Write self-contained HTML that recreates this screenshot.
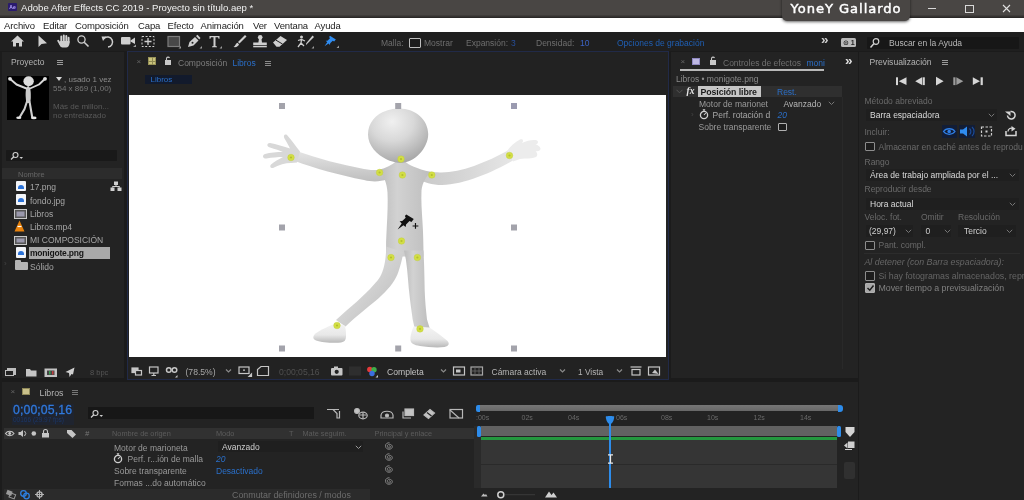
<!DOCTYPE html>
<html lang="es">
<head>
<meta charset="utf-8">
<title>Adobe After Effects CC 2019 - Proyecto sin título.aep *</title>
<style>
html,body{margin:0;padding:0;}
body{width:1024px;height:500px;overflow:hidden;background:#1b1b1b;font-family:"Liberation Sans","DejaVu Sans",sans-serif;font-size:8.5px;color:#a8a8a8;position:relative;}
#app{position:absolute;left:0;top:0;width:1024px;height:500px;overflow:hidden;filter:blur(0.550px);will-change:transform;}
.abs{position:absolute;}
.t{position:absolute;white-space:nowrap;line-height:10px;}
#titlebar{left:0;top:0;width:1024px;height:17.500px;background:linear-gradient(#494644 0,#494644 14.500px,#3a3735 16px,#2a2827 17.500px);}
#menubar{left:0;top:17.800px;width:1024px;height:14.400px;background:#fff;color:#222;}
#toolbar{left:0;top:32.200px;width:1024px;height:19.300px;background:#1f1f1f;}
.panel{background:#232323;}
.m{top:3px;font-size:9.5px;color:#222;letter-spacing:-.12px;}
.fi{left:15.500px;width:10px;height:10.500px;background:#f2f4f8;border-radius:1px;}
.fi i{position:absolute;left:2px;top:4px;width:6px;height:4px;background:#2a72d8;border-radius:3px 3px 0 0;}
.ci{left:14px;width:12.500px;height:9.500px;background:#9a98ac;border:1px solid #c8c8c8;box-sizing:border-box;box-shadow:inset 0 0 0 1.500px #555;}
.li{left:30px;font-size:8.500px;color:#a6a6a6;}
.hd{top:46.500px;font-size:7.350px;color:#5c5c5c;line-height:9px;}
.rw{font-size:8.500px;color:#9a9a9a;}
.rl{top:32px;font-size:7px;color:#6a6a6a;line-height:8px;}
.blue{color:#2d7fe0;}
.wh{color:#e6e6e6;}
.dim{color:#6e6e6e;}
.chk{position:absolute;width:6.5px;height:6.5px;border:1px solid #8d8d8d;border-radius:1px;background:#1d1d1d;}
.dd{position:absolute;color:#8a8a8a;font-size:7px;transform:scaleY(.6);}
</style>
</head>
<body>
<div id="app">
<!-- TITLE BAR -->
<div id="titlebar" class="abs">
  <div class="abs" style="left:7.500px;top:3px;width:9.800px;height:8.400px;background:#2a1a6e;border-radius:1px;"></div>
  <div class="t" style="left:9.300px;top:3.200px;font-size:5px;color:#b9a8ff;line-height:8px;font-weight:bold;">Ae</div>
  <div class="t" style="left:21px;top:3.200px;font-size:9.6px;color:#f2f2f2;">Adobe After Effects CC 2019 - Proyecto sin título.aep *</div>
  <div class="abs" style="left:928px;top:8px;width:8px;height:1px;background:#d8d8d8;"></div>
  <div class="abs" style="left:965px;top:4.5px;width:6.5px;height:6.5px;border:1px solid #d8d8d8;"></div>
  <svg class="abs" style="left:1002px;top:4px;" width="9" height="9" viewBox="0 0 9 9"><path d="M1 1L8 8M8 1L1 8" stroke="#e0e0e0" stroke-width="1.1"/></svg>
</div>
<!-- MENU BAR -->
<div id="menubar" class="abs">
  <div class="t m" style="left:4px;">Archivo</div>
  <div class="t m" style="left:43px;">Editar</div>
  <div class="t m" style="left:75px;">Composición</div>
  <div class="t m" style="left:138px;">Capa</div>
  <div class="t m" style="left:167.5px;">Efecto</div>
  <div class="t m" style="left:200.5px;">Animación</div>
  <div class="t m" style="left:253px;">Ver</div>
  <div class="t m" style="left:274px;">Ventana</div>
  <div class="t m" style="left:314.5px;">Ayuda</div>
</div>
<div class="abs" style="left:781.500px;top:-4px;width:128px;height:25px;background:#494644;border-radius:0 0 5px 5px;box-shadow:0 1px 3px rgba(0,0,0,.6);"></div>
<div class="t" style="left:790.500px;top:1px;font-size:13.100px;line-height:15px;color:#fff;font-family:'DejaVu Sans','Liberation Sans',sans-serif;-webkit-text-stroke:0.450px #fff;letter-spacing:.95px;">YoneY Gallardo</div>
<!-- TOOLBAR -->
<div id="toolbar" class="abs">
  <svg class="abs" style="left:0;top:-0.600px;" width="360" height="19" viewBox="0 0 360 19" fill="none" stroke="none">
    <!-- home -->
    <path d="M11 9.5L17.5 3.5L24 9.5H22V14.5H19V11H16V14.5H13V9.5Z" fill="#cfcfcf"/>
    <!-- selection arrow -->
    <path d="M38.5 3.5V15L41.5 12L47 11.2Z" fill="#cfcfcf"/>
    <!-- hand -->
    <path d="M58.200 8.800L61 13.500M61.300 4.500V10M63.800 3.500V10M66.300 4V10M68.600 5.800V10.500" stroke="#cfcfcf" stroke-width="1.900" stroke-linecap="round"/>
    <path d="M60.200 9H69.500V11C69.500 13.500 68 15.500 66 15.500H62.500C61 15.500 60 14 59.500 12.500Z" fill="#cfcfcf"/>
    <!-- zoom -->
    <circle cx="81.5" cy="7.5" r="3.6" stroke="#cfcfcf" stroke-width="1.3"/>
    <path d="M84.2 10.3L88.5 14.5" stroke="#cfcfcf" stroke-width="1.6"/>
    <!-- rotate -->
    <path d="M104 6.5A5 5 0 1 1 108 15" stroke="#cfcfcf" stroke-width="1.5"/>
    <path d="M101.5 4.5L106.5 4.5L103 9Z" fill="#cfcfcf"/>
    <!-- camera -->
    <rect x="121" y="5" width="9.5" height="7.5" rx="1" fill="#cfcfcf"/>
    <path d="M130.5 8.5L135 5.5V12L130.5 9.5Z" fill="#cfcfcf"/>
    <path d="M133 15L136 15L136 12.5Z" fill="#9a9a9a"/>
    <!-- pan behind -->
    <rect x="142" y="4.5" width="12" height="10" stroke="#cfcfcf" stroke-width="1" stroke-dasharray="2 1.6"/>
    <path d="M148 6V13M144.5 9.5H151.5" stroke="#cfcfcf" stroke-width="1.3"/>
    <!-- rect -->
    <rect x="168" y="4.5" width="11.500" height="10" fill="#484848" stroke="#7c7c7c" stroke-width="1.200"/>
    <path d="M178.5 16.5L181 16.5L181 14Z" fill="#9a9a9a"/>
    <!-- pen -->
    <path d="M188 15L189.5 10L195 5L198.5 8.5L193.5 13.5Z" fill="#cfcfcf"/>
    <path d="M196 4L197.5 2.8L200.5 6L199.3 7.4Z" fill="#cfcfcf"/>
    <circle cx="192.5" cy="10.8" r="1" fill="#222"/>
    <path d="M199.5 16.5L202 16.5L202 14Z" fill="#9a9a9a"/>
    <!-- T -->
    <path d="M209.5 4H219.5V6.8H218.6L218 5.2H215.5V14L217 14.4V15.2H212V14.4L213.5 14V5.2H211L210.4 6.8H209.5Z" fill="#cfcfcf"/>
    <path d="M219.500 16.5L222 16.5L222 14Z" fill="#9a9a9a"/>
    <!-- brush -->
    <path d="M245 3L246.5 4.5L239.5 11.5L238 10Z" fill="#cfcfcf"/>
    <path d="M237.500 10.8L239 12.3C238.500 14.5 236 15.5 233.500 15C235.500 14 235.500 11.5 237.500 10.8Z" fill="#cfcfcf"/>
    <!-- stamp -->
    <circle cx="260.200" cy="5.300" r="2.300" fill="#cfcfcf"/>
    <path d="M259 6.500H261.400L262 10.500H266.800V13.200H253.200V10.500H258.400Z" fill="#cfcfcf"/>
    <rect x="253.200" y="14" width="13.600" height="1.300" fill="#cfcfcf"/>
    <!-- eraser -->
    <path d="M273 10.500L280.500 4L287 8L279.500 14.800L276.500 14.800Z" fill="#cfcfcf"/>
    <path d="M276 8.2L282.500 12" stroke="#222" stroke-width="1"/>
    <!-- roto -->
    <circle cx="301.500" cy="5" r="1.500" fill="#cfcfcf"/>
    <path d="M298 8.5L301.500 7.500L305 9M301.500 7.500L301 11L298 15M301 11L304 14" stroke="#cfcfcf" stroke-width="1.3"/>
    <path d="M312.500 3.5L314 5L307.500 11.500L306 13L306 11.500Z" fill="#cfcfcf"/>
    <path d="M311.500 16.500L314 16.500L314 14Z" fill="#9a9a9a"/>
    <!-- pin -->
    <path transform="translate(324.500 3.800) scale(0.840) translate(-325 -3)" d="M331.500 3L338.500 7.500L336.500 9.800L334.800 9L331.800 12L331.500 14L329.800 12.300L325 15.500L328.200 10.800L326.500 9L328.500 8.800L331.500 6L330.500 4.500Z" fill="#2f8cf0"/>
    <path d="M336.500 16L339 16L339 13.500Z" fill="#9a9a9a"/>
  </svg>
  <div class="t dim" style="left:381px;top:5.700px;font-size:8.5px;">Malla:</div>
  <div class="chk" style="left:409px;top:5.500px;width:9.500px;height:8px;border-color:#bdbdbd;border-width:1.200px;"></div>
  <div class="t dim" style="left:424px;top:5.700px;font-size:8.5px;">Mostrar</div>
  <div class="t dim" style="left:466px;top:5.700px;font-size:8.5px;">Expansión:</div>
  <div class="t blue" style="left:511px;top:5.700px;font-size:8.5px;color:#274f9a;">3</div>
  <div class="t dim" style="left:536px;top:5.700px;font-size:8.5px;">Densidad:</div>
  <div class="t blue" style="left:580px;top:5.700px;font-size:8.5px;color:#3b62c4;">10</div>
  <div class="t" style="left:617px;top:5.700px;font-size:8.5px;color:#1f5fb4;">Opciones de grabación</div>
  <div class="t" style="left:821px;top:2.500px;font-size:13.500px;color:#cfcfcf;font-weight:bold;letter-spacing:-1px;">»</div>
  <div class="abs" style="left:840.500px;top:6px;width:15.500px;height:8.500px;background:#b9b9b9;border-radius:1.500px;"></div>
  <div class="t" style="left:843px;top:5.700px;font-size:7px;line-height:9px;color:#222;font-weight:bold;">⊙ 1</div>
  <div class="abs" style="left:867px;top:5px;width:152px;height:12px;background:#171717;border-radius:1px;"></div>
  <svg class="abs" style="left:869px;top:5.200px;" width="12" height="12" viewBox="0 0 12 12"><circle cx="7" cy="4.500" r="2.800" stroke="#d0d0d0" stroke-width="1.200" fill="none"/><path d="M5 6.500L1.500 10.500" stroke="#d0d0d0" stroke-width="1.500"/></svg>
  <div class="t" style="left:889px;top:6.200px;font-size:8.500px;color:#b8b8b8;">Buscar en la Ayuda</div>
</div>

<!-- PANELS -->
<div id="project" class="abs panel" style="left:0;top:52px;width:124px;height:326px;">
  <div class="t" style="left:11px;top:5px;font-size:8.500px;color:#b4b4b4;">Proyecto</div>
  <div class="abs" style="left:56.500px;top:7.500px;width:6px;height:1px;background:#9a9a9a;box-shadow:0 2px 0 #9a9a9a,0 4px 0 #9a9a9a;"></div>
  <!-- thumbnail -->
  <div class="abs" style="left:6.500px;top:23.500px;width:42px;height:44.500px;background:#000;"></div>
  <svg class="abs" style="left:6.500px;top:24px;" width="42" height="44" viewBox="0 0 42 44" fill="none">
    <ellipse cx="21.600" cy="5.200" rx="5.200" ry="5" fill="#dcdcdc"/>
    <path d="M21.200 10C18.600 11 18.400 17 18.800 22C19 26 19.400 27 21.200 27C23 27 23.600 26 23.800 22C24 17 23.800 11 21.200 10Z" fill="#cacaca"/>
    <path d="M19.500 12.500L9.500 8.500L3.500 3.200" stroke="#d8d8d8" stroke-width="1.900" stroke-linecap="round" stroke-linejoin="round"/>
    <path d="M23 12.500L32 8.500L37.500 3.200" stroke="#d8d8d8" stroke-width="1.900" stroke-linecap="round" stroke-linejoin="round"/>
    <path d="M20 25.500L17.500 33L12.800 41" stroke="#cfcfcf" stroke-width="2.100" stroke-linecap="round"/>
    <path d="M22.500 25.500L23.800 33L25.200 41" stroke="#cfcfcf" stroke-width="2.100" stroke-linecap="round"/>
    <ellipse cx="11.800" cy="41.800" rx="2.600" ry="1.300" fill="#e4e4e4"/>
    <ellipse cx="26.800" cy="41.900" rx="2.800" ry="1.300" fill="#e4e4e4"/>
    <circle cx="3" cy="2.800" r="1.900" fill="#e0e0e0"/>
    <circle cx="38" cy="2.800" r="1.900" fill="#e0e0e0"/>
  </svg>
  <div class="abs" style="left:56px;top:27px;width:0;height:0;border-left:3px solid transparent;border-right:3px solid transparent;border-top:4px solid #d8d8d8;margin-top:-2px;"></div>
  <div class="t dim" style="left:64px;top:22.500px;font-size:8px;color:#8c8c8c;">, usado 1 vez</div>
  <div class="t dim" style="left:53px;top:32.200px;font-size:8px;color:#777;">554 x 869 (1,00)</div>
  <div class="t dim" style="left:53px;top:49.600px;font-size:8px;color:#5a5a5a;">Más de millon...</div>
  <div class="t dim" style="left:53px;top:59px;font-size:8px;color:#5a5a5a;">no entrelazado</div>
  <!-- search -->
  <div class="abs" style="left:6px;top:98px;width:111px;height:11px;background:#191919;border-radius:1px;"></div>
  <svg class="abs" style="left:10px;top:99px;" width="16" height="10" viewBox="0 0 16 10"><circle cx="5.500" cy="4" r="2.500" stroke="#cfcfcf" stroke-width="1.100" fill="none"/><path d="M3.800 5.800L1 8.500" stroke="#cfcfcf" stroke-width="1.300"/><path d="M9.500 6L13 6L11.200 8Z" fill="#cfcfcf"/></svg>
  <!-- header -->
  <div class="abs" style="left:2px;top:116px;width:120px;height:11px;background:#2c2c2c;"></div>
  <div class="t" style="left:18px;top:117.500px;font-size:7.500px;color:#666;line-height:9px;">Nombre</div>
  <!-- list -->
  <div class="abs" style="left:28.500px;top:194.500px;width:81px;height:12.500px;background:#a9a9a9;"></div>
  <div class="abs fi" style="top:128.500px;"><i></i></div>
  <div class="abs fi" style="top:142px;"><i></i></div>
  <div class="abs ci" style="top:157px;"></div>
  <svg class="abs" style="left:14px;top:167.500px;" width="11" height="12" viewBox="0 0 11 12"><path d="M5.500 0.500L10.500 11.500H0.500Z" fill="#e8820c"/><path d="M3.500 6.500H7.500" stroke="#fff" stroke-width="1.200"/></svg>
  <div class="abs ci" style="top:183.500px;"></div>
  <div class="abs fi" style="top:195px;"><i></i></div>
  <div class="abs" style="left:15px;top:209.500px;width:12.500px;height:8px;background:#b5b5b5;border-radius:1px;"></div>
  <div class="abs" style="left:15px;top:208px;width:5.500px;height:3px;background:#b5b5b5;border-radius:1px;"></div>
  <div class="t dim" style="left:4px;top:207px;font-size:8px;color:#444;">›</div>
  <div class="t li" style="top:130px;">17.png</div>
  <div class="t li" style="top:143.500px;">fondo.jpg</div>
  <div class="t li" style="top:156.500px;">Libros</div>
  <div class="t li" style="top:170px;">Libros.mp4</div>
  <div class="t li" style="top:183px;">MI COMPOSICIÓN</div>
  <div class="t li" style="top:196px;color:#151515;font-weight:bold;letter-spacing:-.2px;">monigote.png</div>
  <div class="t li" style="top:209.500px;">Sólido</div>
  <svg class="abs" style="left:110px;top:129px;" width="12" height="11" viewBox="0 0 12 11"><rect x="4" y="0.500" width="4" height="3.500" fill="#d0d0d0"/><rect x="0.500" y="6.500" width="4" height="3.500" fill="#d0d0d0"/><rect x="7.500" y="6.500" width="4" height="3.500" fill="#d0d0d0"/><path d="M6 4V5.500M2.500 6.500V5.500H9.500V6.500" stroke="#d0d0d0" stroke-width="1" fill="none"/></svg>
  <!-- bottom bar -->
  <svg class="abs" style="left:0;top:311.800px;" width="126" height="16" viewBox="0 0 126 16" fill="none">
    <rect x="7" y="4" width="9" height="7" fill="#bdbdbd"/><rect x="5" y="6" width="9" height="6" fill="#232323"/><rect x="5.500" y="6.500" width="8" height="5" stroke="#bdbdbd"/>
    <path d="M26 5H30L31 6.500H36.500V12.500H26Z" fill="#c4c4c4"/>
    <rect x="44.500" y="4.500" width="12.500" height="8.500" fill="#c4c4c4"/><path d="M47 6.500H54.500V11H47Z" fill="#444"/><rect x="49" y="7" width="1.500" height="3.500" fill="#3c9a50"/><rect x="52" y="7" width="1.500" height="3.500" fill="#c04040"/>
    <path d="M74.500 3.500L65.500 8L69 9L69.500 13L71.500 10L73 10.500Z" fill="#cfcfcf"/>
  </svg>
  <div class="t" style="left:90px;top:315.500px;font-size:7.500px;color:#555;">8 bpc</div>
</div>
<div id="comp" class="abs" style="left:126.500px;top:51px;width:542.500px;height:328.500px;background:#222222;border:1px solid #212a48;box-sizing:border-box;">
  <div class="t" style="left:9px;top:5px;font-size:8px;color:#666;">×</div>
  <div class="abs" style="left:20px;top:5px;width:8.500px;height:8px;background:#c9c27c;box-shadow:inset 0 0 0 1px #9a9458;"></div><div class="abs" style="left:24px;top:5px;width:0.800px;height:8px;background:#8f8a52;"></div><div class="abs" style="left:20px;top:8.700px;width:8.500px;height:0.800px;background:#8f8a52;"></div>
  <svg class="abs" style="left:36.500px;top:3.500px;" width="8" height="10" viewBox="0 0 8 10"><rect x="1" y="4" width="6" height="5" fill="#c8c8c8"/><path d="M2.500 4V2.500A1.600 1.600 0 0 1 5.500 2" stroke="#c8c8c8" stroke-width="1.100" fill="none"/></svg>
  <div class="t" style="left:50.500px;top:6px;font-size:8.500px;color:#7d7d7d;">Composición</div>
  <div class="t" style="left:105px;top:6px;font-size:8.500px;color:#2a6fc9;">Libros</div>
  <div class="abs" style="left:137px;top:8.500px;width:6px;height:1px;background:#8a8a8a;box-shadow:0 2px 0 #8a8a8a,0 4px 0 #8a8a8a;"></div>
  <div class="abs" style="left:17px;top:22.500px;width:47px;height:9.500px;background:#121a2c;"></div>
  <div class="t" style="left:23px;top:22.500px;font-size:8px;color:#2a6fc9;">Libros</div>
  <!-- viewport -->
  <div class="abs" style="left:1.500px;top:42.500px;width:537px;height:262.500px;background:#fff;"></div>
  <svg class="abs" style="left:3.500px;top:42.500px;" width="536" height="263" viewBox="131 94.500 536 263" fill="none">
    <defs>
      <radialGradient id="gh" cx="0.40" cy="0.24" r="0.800"><stop offset="0" stop-color="#f0f0f0"/><stop offset="0.45" stop-color="#d8d8d8"/><stop offset="1" stop-color="#a4a4a4"/></radialGradient>
      <linearGradient id="gb" x1="0" y1="0" x2="1" y2="0"><stop offset="0" stop-color="#bcbcbc"/><stop offset="0.35" stop-color="#d2d2d2"/><stop offset="1" stop-color="#bdbdbd"/></linearGradient>
      <linearGradient id="ga" x1="0" y1="0" x2="0" y2="1"><stop offset="0" stop-color="#e4e4e4"/><stop offset="1" stop-color="#bebebe"/></linearGradient>
      <linearGradient id="gl" x1="0" y1="0" x2="1" y2="1"><stop offset="0" stop-color="#bebebe"/><stop offset="0.45" stop-color="#d4d4d4"/><stop offset="1" stop-color="#b8b8b8"/></linearGradient>
      <linearGradient id="gs" x1="0" y1="0" x2="0" y2="1"><stop offset="0" stop-color="#f4f4f4"/><stop offset="0.6" stop-color="#e8e8e8"/><stop offset="1" stop-color="#b8b8b8"/></linearGradient>
      <linearGradient id="gr" x1="0" y1="0" x2="1" y2="0"><stop offset="0" stop-color="#c8c8c8"/><stop offset="0.5" stop-color="#d6d6d6"/><stop offset="1" stop-color="#e6e6e6"/></linearGradient>
      <filter id="bl" x="-5%" y="-5%" width="110%" height="110%"><feGaussianBlur stdDeviation="0.700"/></filter>
    </defs>
    <g filter="url(#bl)">
      <!-- left arm -->
      <path d="M386 169.500C378 169.500 372 170 364 168.500C340 164 318 158 298 151L295 160.500C314 167.500 340 175 364 179.500C374 182 382 181 389 178Z" fill="url(#ga)"/>
      <!-- left hand -->
      <path d="M300 151C296 146 291 139 287 134.500C284.500 133 283 135.500 284.500 138C287 142.500 289 145.500 290 148C284 146 276 143.500 270 142.500C266.500 142.500 266.500 146 270 147C275 148.500 280 150 283 151.500C277 151.500 270 152 265 153.500C261.500 155 263 158.500 266.500 158C272 157 278 156.500 283 156.500C279 158.500 274 161.500 271 164C269 166.500 271.500 168.500 274 167C279 164.500 285 162.500 291 162.500L297 162Z" fill="#d8d8d8"/>
      <!-- right arm -->
      <path d="M421 171C428 171 432 171.500 440 172C460 172.500 486 162 508 150L513 160C492 172 464 184 442 184.500C432 184.500 424 182 417 178Z" fill="url(#gr)"/>
      <!-- right hand -->
      <path d="M507 150.500C510 146 515 141.500 520 139C523 138 524 140.500 522 142.500C527 140 532 139 536 139.500C539 140.500 538.500 143.500 535.500 144C538 144.500 540 146 540.500 148C540.500 150.500 538 151 535.500 150.500C537.500 152.500 538 155 536 156.500C532 158.500 526 157.500 520 158.500L513 161Z" fill="#ececec"/>
      <!-- torso -->
      <path d="M379 169.500C386 167.500 392 164.500 396 161H405C409 164.500 416 168 431 171.500C426 176 422.500 182 421.500 190C421 200 421.800 210 422.500 222C423.200 232 423.500 244 423.500 256L386 256C385.800 246 386.200 236 386.800 226C387.500 214 388 202 387.500 192C387 183 384 175 379 169.500Z" fill="url(#gb)"/>
      <!-- left leg -->
      <path d="M386.300 246C386 254 385.500 260 384 266C382 274 379 279 374 284C368 291 362 296 357 301C350 307 343 313 336 319.500L345.500 326C352 320 358 314.500 365 309C371 304 377 299.500 382 294.500C390 287 396 279 398.500 271C400.500 265 402 259 403.500 252Z" fill="url(#gl)"/>
      <!-- right leg -->
      <path d="M404 250C405.500 256 406.500 262 407 268C408 278 408.500 284 409 290C410 300 411.500 310 412.700 319L415 329.500L429.800 328L427 319C426 310 425 300 424.700 290C424.500 280 424.300 270 424 262L423.500 250Z" fill="url(#gb)"/>
      <!-- shoes -->
      <path d="M337 322.500C330 325 320 329.500 315.500 333C312.500 335.500 312.500 338.500 316 340C322 342 334 342.800 341 342C344.500 341.500 346 339.500 346 336C346 332 346 328 344.500 325Z" fill="url(#gs)"/>
      <path d="M413.500 326C411.500 331 410 336 410.500 340C411 343 414 344.500 420 345.500C428 346.800 438 347.300 444.500 346.500C449 345.800 450 342.500 447 340C442 335.500 435 331 429.500 327Z" fill="url(#gs)"/>
      <!-- head -->
      <path d="M398 108C416 107.500 428.500 120 428.200 134C428 148 414 162.500 400.500 162.500C387 162.500 368 150 368 134C368 119 381 108.500 398 108Z" fill="url(#gh)"/>
    </g>
    <!-- handles -->
    <g fill="#a3a3ab">
      <rect x="279" y="102.500" width="6" height="6"/><rect x="395.200" y="102.500" width="6" height="6"/><rect x="511" y="102.500" width="6" height="6" fill="#9a9ab0"/>
      <rect x="279" y="224" width="6" height="6"/><rect x="511" y="224" width="6" height="6"/>
      <rect x="279" y="345" width="6" height="6"/><rect x="395.200" y="345" width="6" height="6"/><rect x="511" y="345" width="6" height="6"/>
    </g>
    <!-- pins -->
    <g fill="#d2de44" stroke="#c0cc3c" stroke-width="0.400" filter="url(#bl)">
      <circle cx="291" cy="157" r="3.300"/><circle cx="401" cy="158.600" r="3.300"/><circle cx="379.600" cy="172" r="3.300"/><circle cx="402.400" cy="174.500" r="3.300"/><circle cx="431.800" cy="174.500" r="3.300"/><circle cx="509.500" cy="155" r="3.300"/>
      <circle cx="401.500" cy="240.500" r="3.300"/><circle cx="391" cy="257" r="3.300"/><circle cx="417.400" cy="257" r="3.300"/><circle cx="337" cy="325" r="3.300"/><circle cx="420" cy="328.400" r="3.300"/>
    </g>
    <g fill="#b4be30" filter="url(#bl)">
      <circle cx="291" cy="157" r="1.100"/><circle cx="401" cy="158.600" r="1.100"/><circle cx="379.600" cy="172" r="1.100"/><circle cx="402.400" cy="174.500" r="1.100"/><circle cx="431.800" cy="174.500" r="1.100"/><circle cx="509.500" cy="155" r="1.100"/>
      <circle cx="401.500" cy="240.500" r="1.100"/><circle cx="391" cy="257" r="1.100"/><circle cx="417.400" cy="257" r="1.100"/><circle cx="337" cy="325" r="1.100"/><circle cx="420" cy="328.400" r="1.100"/>
    </g>
    <!-- pin cursor -->
    <g transform="translate(408 222) scale(1.150) translate(-407.500 -222.500)"><path d="M406 215.500L412.500 219.500L410.500 222L408.800 221.300L405.800 224.300L405.500 226.500L403.500 224.800L398.500 228.500L402 223.300L400.200 221.500L402.500 221.200L405.500 218.300L404.800 216.800Z" fill="#111"/>
    <path d="M411.500 225.500H416.500M414 223V228" stroke="#111" stroke-width="1"/></g>
  </svg>
  <!-- bottom toolbar placeholder -->
  <div id="compbar" class="abs" style="left:0.500px;top:306px;width:540px;height:21px;">
  <svg class="abs" style="left:0;top:0;" width="540" height="21" viewBox="128 358 540 21" fill="none">
    <g stroke="#c6c6c6" stroke-width="1.200">
      <rect x="132" y="368" width="6" height="4.500" fill="#c6c6c6"/><rect x="135.500" y="370.500" width="6" height="4.500" fill="#232323"/>
      <rect x="149.500" y="367" width="8.500" height="6"/><path d="M151.500 375.500H156M153.800 373V375.500"/>
      <circle cx="168.800" cy="370" r="2.300" stroke-width="1.500"/><circle cx="174.500" cy="370" r="2.300" stroke-width="1.500"/><path d="M175 377.500L177.500 377.500L177.500 375Z" fill="#c6c6c6" stroke="none"/>
      <path d="M226 369.500L228.500 372L231 369.500" stroke="#8a8a8a"/>
      <rect x="239" y="367" width="10" height="6.500"/><path d="M243 370.200H245M249 376.500L251.500 376.500L251.500 374Z"/>
      <path d="M257.500 375.500V369.500L261 366.500H268.500V375.500Z"/>
      <path d="M441 369.500L443.500 372L446 369.500" stroke="#8a8a8a"/>
      <rect x="453.500" y="367" width="11" height="8"/><rect x="456" y="369.500" width="4.500" height="3" fill="#c6c6c6" stroke="none"/>
      <rect x="471" y="367" width="11.500" height="8" stroke="#a8a8a8"/><path d="M471 371H482.500M475 367V375M479 367V375" stroke="#6a6a6a" stroke-width="0.800"/>
      <path d="M560 369.500L562.500 372L565 369.500" stroke="#8a8a8a"/>
      <path d="M617 369.500L619.500 372L622 369.500" stroke="#8a8a8a"/>
      <rect x="632" y="369.500" width="8" height="5.500"/><path d="M630.500 367H641.500"/>
      <rect x="648.500" y="367" width="11" height="8"/><path d="M652 373L655 369.500L658.500 374Z" fill="#c6c6c6" stroke="none"/>
    </g>
    <rect x="331" y="368" width="11.500" height="7.500" rx="1" fill="#c6c6c6"/><rect x="334" y="366.500" width="4" height="2" fill="#c6c6c6"/><circle cx="336.700" cy="371.800" r="2.100" fill="#232323"/>
    <rect x="349" y="366.500" width="12" height="9" fill="#2e2e2e"/>
    <circle cx="369.800" cy="369.500" r="2.700" fill="#e53a3a"/><circle cx="374" cy="369.800" r="2.700" fill="#3fae4a"/><circle cx="372" cy="373.500" r="2.700" fill="#3b6fe0"/>
    <path d="M375.500 377.500L378 377.500L378 375Z" fill="#c6c6c6"/>
  </svg>
  <div class="t" style="left:57.500px;top:8.500px;font-size:8.600px;color:#a8a8a8;">(78.5%)</div>
  <div class="t" style="left:151px;top:8.500px;font-size:8.600px;color:#505050;">0;00;05,16</div>
  <div class="t" style="left:259px;top:8.500px;font-size:8.600px;color:#c2c2c2;">Completa</div>
  <div class="t" style="left:363.500px;top:8.500px;font-size:8.500px;color:#b4b4b4;">Cámara activa</div>
  <div class="t" style="left:450px;top:8.500px;font-size:8.300px;color:#b4b4b4;">1 Vista</div>
</div>
</div>
<div id="fx" class="abs panel" style="left:671px;top:52px;width:186.500px;height:326px;">
  <div class="t" style="left:9.500px;top:5px;font-size:8px;color:#666;">×</div>
  <div class="abs" style="left:21px;top:5.500px;width:8px;height:7.500px;background:#bdb7e2;box-shadow:inset 0 0 0 1px #8f88c0;"></div>
  <svg class="abs" style="left:37.500px;top:4px;" width="8" height="10" viewBox="0 0 8 10"><rect x="1" y="4" width="6" height="5" fill="#c8c8c8"/><path d="M2.500 4V2.500A1.600 1.600 0 0 1 5.500 2" stroke="#c8c8c8" stroke-width="1.100" fill="none"/></svg>
  <div class="t" style="left:52px;top:5.500px;font-size:8.500px;color:#707070;">Controles de efectos</div>
  <div class="t" style="left:135.500px;top:5.500px;font-size:8.500px;color:#2a6fc9;">moni</div>
  <div class="t" style="left:174px;top:3.500px;font-size:13.500px;color:#e0e0e0;font-weight:bold;letter-spacing:-1px;">»</div>
  <div class="abs" style="left:171px;top:45px;width:1px;height:272px;background:#292929;"></div>
  <div class="abs" style="left:9px;top:17px;width:144px;height:1.800px;background:#b8b8b8;"></div>
  <div class="t" style="left:5px;top:22px;font-size:8.500px;color:#8a8a8a;">Libros • monigote.png</div>
  <div class="abs" style="left:2px;top:33.500px;width:169px;height:11px;background:#2f2f2f;"></div>
  <svg class="abs" style="left:5px;top:36.500px;" width="7" height="5" viewBox="0 0 7 5"><path d="M0.500 0.800L3.500 3.800L6.500 0.800" stroke="#555" fill="none"/></svg>
  <div class="t" style="left:15.500px;top:33.500px;font-size:9.500px;color:#e8e8e8;font-style:italic;font-weight:bold;font-family:'Liberation Serif',serif;">fx</div>
  <div class="abs" style="left:26.500px;top:34px;width:63.500px;height:10.500px;background:#c6c6c6;"></div>
  <div class="t" style="left:29.500px;top:34.500px;font-size:8.800px;color:#1c1c1c;font-weight:bold;letter-spacing:-.1px;">Posición libre</div>
  <div class="t" style="left:106px;top:34.500px;font-size:8.500px;color:#2a6fc9;">Rest.</div>
  <div class="t" style="left:28px;top:46.500px;font-size:8.500px;color:#9a9a9a;">Motor de marionet</div>
  <div class="t" style="left:112.500px;top:46.500px;font-size:8.500px;color:#b6b6b6;">Avanzado</div>
  <svg class="abs" style="left:157px;top:49px;" width="7" height="5" viewBox="0 0 7 5"><path d="M0.800 0.800L3.500 3.500L6.200 0.800" stroke="#777" fill="none"/></svg>
  <div class="t" style="left:20px;top:57.500px;font-size:8px;color:#444;">›</div>
  <svg class="abs" style="left:28px;top:57px;" width="10" height="11" viewBox="0 0 10 11"><circle cx="5" cy="6" r="3.600" stroke="#d0d0d0" stroke-width="1.300" fill="none"/><path d="M3.800 0.800H6.200M5 1V2.500M5 6L6.800 4" stroke="#d0d0d0" stroke-width="1.100"/></svg>
  <div class="t" style="left:41.500px;top:58px;font-size:8.500px;color:#a8a8a8;">Perf. rotación d</div>
  <div class="t" style="left:106.500px;top:58px;font-size:8.500px;color:#2a6fc9;font-style:italic;">20</div>
  <div class="t" style="left:27.500px;top:70px;font-size:8.500px;color:#9a9a9a;">Sobre transparente</div>
  <div class="chk" style="left:106.500px;top:70.500px;width:7px;height:6.500px;border-color:#b0b0b0;"></div>
</div>
<div id="preview" class="abs panel" style="left:859px;top:52px;width:165px;height:448px;">
  <div class="t" style="left:10.500px;top:5px;font-size:8.600px;color:#b4b4b4;">Previsualización</div>
  <div class="abs" style="left:82.500px;top:7.500px;width:6.500px;height:1px;background:#9a9a9a;box-shadow:0 2px 0 #9a9a9a,0 4px 0 #9a9a9a;"></div>
  <svg class="abs" style="left:30px;top:23px;" width="100" height="13" viewBox="889 75 100 13" fill="#d6d6d6">
    <rect x="896" y="77.300" width="2" height="7.800"/><path d="M906.500 77.300V85.100L898.800 81.200Z"/>
    <path d="M922 77.300V85.100L915.200 81.200Z"/><rect x="922.600" y="77.300" width="2.200" height="7.800"/>
    <path d="M936 76.800V85.600L943.600 81.200Z"/>
    <rect x="953.300" y="77.300" width="2.200" height="7.800" fill="#9c9c9c"/><path d="M956.300 77.300V85.100L963.300 81.200Z" fill="#9c9c9c"/>
    <path d="M972.800 77.300V85.100L980 81.200Z"/><rect x="980.600" y="77.300" width="2.200" height="7.800"/>
  </svg>
  <div class="t" style="left:5.500px;top:44px;font-size:8.500px;color:#6a6a6a;">Método abreviado</div>
  <div class="abs" style="left:7px;top:57px;width:131px;height:12px;background:#1f1f1f;"></div>
  <div class="t" style="left:11px;top:58px;font-size:8.500px;color:#dcdcdc;">Barra espaciadora</div>
  <svg class="abs" style="left:129px;top:61px;" width="7" height="5" viewBox="0 0 7 5"><path d="M0.800 0.800L3.500 3.500L6.200 0.800" stroke="#777" fill="none"/></svg>
  <svg class="abs" style="left:145px;top:57px;" width="13" height="12" viewBox="0 0 13 12" fill="none"><path d="M3.500 6.500A3.800 3.800 0 1 0 6.500 2.500" stroke="#d6d6d6" stroke-width="1.500"/><path d="M1 2.500H6.500V7Z" fill="#d6d6d6"/></svg>
  <div class="t" style="left:5.500px;top:74.500px;font-size:8.500px;color:#6a6a6a;">Incluir:</div>
  <div class="abs" style="left:82.500px;top:73px;width:15px;height:13px;background:#121d36;"></div>
  <svg class="abs" style="left:83px;top:73px;" width="78" height="13" viewBox="942 125 78 13" fill="none">
    <path d="M943.500 131.500C946 127.800 952.500 127.800 955 131.500C952.500 135.200 946 135.200 943.500 131.500Z" stroke="#2f7fe6" stroke-width="1.300"/><circle cx="949.200" cy="131.500" r="1.800" fill="#2f7fe6"/>
    <rect x="959" y="125" width="16" height="13" fill="#121d36"/>
    <path d="M960 129.500H963L967 126.500V136.500L963 133.500H960Z" fill="#2f8cf0"/>
    <path d="M969.500 128.500A4 4 0 0 1 969.500 134.500M972 127A6 6 0 0 1 972 136" stroke="#1c4b96" stroke-width="1.200"/>
    <rect x="981.500" y="127" width="10" height="9" stroke="#d0d0d0" stroke-width="1.200" stroke-dasharray="2.500 1.500"/><rect x="985.500" y="130.500" width="2" height="2" fill="#d0d0d0"/>
    <path d="M1006 131V135.500H1016V131" stroke="#d6d6d6" stroke-width="1.500"/><path d="M1008 131.500C1008 128.500 1011 127.500 1013 128.500" stroke="#d6d6d6" stroke-width="1.300"/><path d="M1011.500 126L1015.500 128.800L1011.500 131.500Z" fill="#d6d6d6"/>
  </svg>
  <div class="chk" style="left:5.500px;top:89.500px;width:8.500px;height:7.500px;"></div>
  <div class="t" style="left:19.500px;top:89.500px;font-size:8.500px;color:#6a6a6a;">Almacenar en caché antes de reprodu</div>
  <div class="t" style="left:5.500px;top:104.500px;font-size:8.500px;color:#6a6a6a;">Rango</div>
  <div class="abs" style="left:7px;top:117px;width:153px;height:12px;background:#1f1f1f;"></div>
  <div class="t" style="left:11px;top:118px;font-size:8.500px;color:#dcdcdc;">Área de trabajo ampliada por el ...</div>
  <svg class="abs" style="left:150px;top:121px;" width="7" height="5" viewBox="0 0 7 5"><path d="M0.800 0.800L3.500 3.500L6.200 0.800" stroke="#777" fill="none"/></svg>
  <div class="t" style="left:5.500px;top:132px;font-size:8.500px;color:#6a6a6a;">Reproducir desde</div>
  <div class="abs" style="left:7px;top:145.500px;width:153px;height:12px;background:#1f1f1f;"></div>
  <div class="t" style="left:11px;top:146.500px;font-size:8.500px;color:#dcdcdc;">Hora actual</div>
  <svg class="abs" style="left:150px;top:149.500px;" width="7" height="5" viewBox="0 0 7 5"><path d="M0.800 0.800L3.500 3.500L6.200 0.800" stroke="#777" fill="none"/></svg>
  <div class="t" style="left:5.500px;top:160px;font-size:8.500px;color:#6a6a6a;">Veloc. fot.</div>
  <div class="t" style="left:62px;top:160px;font-size:8.500px;color:#6a6a6a;">Omitir</div>
  <div class="t" style="left:99px;top:160px;font-size:8.500px;color:#6a6a6a;">Resolución</div>
  <div class="abs" style="left:7px;top:172.500px;width:47px;height:12px;background:#1f1f1f;"></div>
  <div class="abs" style="left:62px;top:172.500px;width:30px;height:12px;background:#1f1f1f;"></div>
  <div class="abs" style="left:99px;top:172.500px;width:58px;height:12px;background:#1f1f1f;"></div>
  <div class="t" style="left:10px;top:173.500px;font-size:8.500px;color:#cfcfcf;">(29,97)</div>
  <div class="t" style="left:66.500px;top:173.500px;font-size:8.500px;color:#cfcfcf;">0</div>
  <div class="t" style="left:105px;top:173.500px;font-size:8.500px;color:#cfcfcf;">Tercio</div>
  <svg class="abs" style="left:46px;top:176.500px;" width="7" height="5" viewBox="0 0 7 5"><path d="M0.800 0.800L3.500 3.500L6.200 0.800" stroke="#777" fill="none"/></svg>
  <svg class="abs" style="left:84.500px;top:176.500px;" width="7" height="5" viewBox="0 0 7 5"><path d="M0.800 0.800L3.500 3.500L6.200 0.800" stroke="#777" fill="none"/></svg>
  <svg class="abs" style="left:147px;top:176.500px;" width="7" height="5" viewBox="0 0 7 5"><path d="M0.800 0.800L3.500 3.500L6.200 0.800" stroke="#777" fill="none"/></svg>
  <div class="chk" style="left:5.500px;top:188.500px;width:8.500px;height:7px;"></div>
  <div class="t" style="left:19.500px;top:188px;font-size:8.500px;color:#6a6a6a;">Pant. compl.</div>
  <div class="abs" style="left:5px;top:201px;width:156px;height:1px;background:#2c2c2c;"></div>
  <div class="t" style="left:5.500px;top:205px;font-size:8.800px;color:#666;font-style:italic;">Al detener (con Barra espaciadora):</div>
  <div class="chk" style="left:5.500px;top:219px;width:8.500px;height:7.500px;"></div>
  <div class="t" style="left:19.500px;top:218.500px;font-size:8.800px;color:#666;">Si hay fotogramas almacenados, repr</div>
  <div class="chk" style="left:5.500px;top:231px;width:8.500px;height:7.500px;background:#a8a8a8;border-color:#b0b0b0;"></div>
  <svg class="abs" style="left:6.500px;top:232px;" width="9" height="8" viewBox="0 0 9 8"><path d="M1.500 4L3.800 6.200L7.500 1.500" stroke="#1e1e1e" stroke-width="1.500" fill="none"/></svg>
  <div class="t" style="left:19.500px;top:230.500px;font-size:8.800px;color:#808080;">Mover tiempo a previsualización</div>
</div>
<div id="timeline" class="abs panel" style="left:0;top:381.500px;width:857.500px;height:118.500px;"><div class="abs" style="left:0;top:0.500px;width:857.500px;height:118px;">
  <div class="t" style="left:10.500px;top:5px;font-size:8px;color:#666;">×</div>
  <div class="abs" style="left:22px;top:5.500px;width:8px;height:7.500px;background:#c9c08a;box-shadow:inset 0 0 0 1px #8f8858;"></div>
  <div class="t" style="left:39.500px;top:5.500px;font-size:8.800px;color:#b4b4b4;">Libros</div>
  <div class="abs" style="left:72px;top:8px;width:5.500px;height:1px;background:#777;box-shadow:0 2px 0 #777,0 4px 0 #777;"></div>
  <div class="abs" style="left:11.500px;top:22px;width:62px;height:20.500px;background:rgba(22,40,80,.28);"></div>
  <div class="t" style="left:13px;top:21.500px;font-size:12.300px;line-height:13px;color:#3079dc;letter-spacing:.1px;-webkit-text-stroke:0.300px #3079dc;">0;00;05,16</div>
  <div class="t" style="left:13px;top:34px;font-size:6.500px;line-height:8px;color:#1c3768;">00166 (29.97 fps)</div>
  <div class="abs" style="left:88px;top:25px;width:225.500px;height:11.800px;background:#171717;"></div>
  <svg class="abs" style="left:90px;top:26.500px;" width="16" height="10" viewBox="0 0 16 10"><circle cx="5.500" cy="4" r="2.500" stroke="#cfcfcf" stroke-width="1.100" fill="none"/><path d="M3.800 5.800L1 8.500" stroke="#cfcfcf" stroke-width="1.300"/><path d="M9.500 6L13 6L11.200 8Z" fill="#cfcfcf"/></svg>
  <svg class="abs" style="left:320px;top:24px;" width="150" height="16" viewBox="320 406 150 16" fill="none" stroke="#b8b8b8" stroke-width="1.200">
    <path d="M327 409.500H339M333 409.500L337 413.500V418H339.500V411"/>
    <circle cx="357" cy="411" r="2.400" fill="#c4c4c4"/><ellipse cx="363" cy="415.500" rx="4.200" ry="3.300"/><path d="M359.500 415H366.500M363 412.500V418.500"/>
    <path d="M381 418V415C382 410 392 410 393 415V418Z"/><circle cx="387" cy="415.500" r="1.500" fill="#c4c4c4"/>
    <rect x="405" y="409" width="8.500" height="6.500" fill="#c4c4c4"/><path d="M403 411.500V418H411"/>
    <path d="M424 415L430 409.500L434.500 413L428.500 418.500Z" fill="#c4c4c4"/><path d="M427 412.500L431.500 416" stroke="#232323"/>
    <rect x="450" y="409.500" width="12.500" height="8.500"/><path d="M450 410L459 418"/>
  </svg>
  <!-- column header -->
  <div class="abs" style="left:3.500px;top:45.500px;width:471px;height:11px;background:#313131;"></div>
  <svg class="abs" style="left:4px;top:45.500px;" width="90" height="11" viewBox="4 427.500 90 11" fill="none">
    <path d="M5.500 433C7.500 430 12 430 14 433C12 436 7.500 436 5.500 433Z" stroke="#c6c6c6" stroke-width="1.100"/><circle cx="9.700" cy="433" r="1.400" fill="#c6c6c6"/>
    <path d="M18.500 431.500H20.500L23 429.500V436.500L20.500 434.500H18.500Z" fill="#c6c6c6"/><path d="M24.500 430.500A3.500 3.500 0 0 1 24.500 435.500" stroke="#c6c6c6"/>
    <circle cx="33.800" cy="433" r="2.300" fill="#c6c6c6"/>
    <rect x="42" y="432.500" width="7" height="4.500" fill="#c6c6c6"/><path d="M43.500 432.500V431A2 2 0 0 1 47.500 431V432.500" stroke="#c6c6c6" stroke-width="1.100"/>
    <path d="M67 429.500H71.500L76 434L72.500 437.500L67 432.500Z" fill="#c6c6c6"/>
  </svg>
  <div class="t" style="left:85px;top:46.500px;font-size:7.500px;color:#777;font-style:italic;line-height:9px;">#</div>
  <div class="t hd" style="left:112px;">Nombre de origen</div>
  <div class="t hd" style="left:216px;">Modo</div>
  <div class="t hd" style="left:289px;">T</div>
  <div class="t hd" style="left:302.500px;">Mate seguim.</div>
  <div class="t hd" style="left:374.500px;">Principal y enlace</div>
  <!-- rows -->
  <div class="abs" style="left:218px;top:58.500px;width:145px;height:11.500px;background:#1f1f1f;"></div>
  <div class="t" style="left:222px;top:60px;font-size:8.500px;color:#cfcfcf;">Avanzado</div>
  <svg class="abs" style="left:355px;top:63px;" width="7" height="5" viewBox="0 0 7 5"><path d="M0.800 0.800L3.500 3.500L6.200 0.800" stroke="#999" fill="none"/></svg>
  <div class="t rw" style="left:114px;top:60.500px;">Motor de marioneta</div>
  <svg class="abs" style="left:112.500px;top:71px;" width="10" height="11" viewBox="0 0 10 11"><circle cx="5" cy="6" r="3.600" stroke="#d0d0d0" stroke-width="1.300" fill="none"/><path d="M3.800 0.800H6.200M5 1V2.500M5 6L6.800 4" stroke="#d0d0d0" stroke-width="1.100"/></svg>
  <div class="t rw" style="left:127.500px;top:72px;">Perf. r...ión de malla</div>
  <div class="t" style="left:216px;top:71.500px;font-size:8.500px;color:#2a6fc9;font-style:italic;">20</div>
  <div class="t rw" style="left:114px;top:84px;">Sobre transparente</div>
  <div class="t" style="left:216px;top:83.500px;font-size:8.500px;color:#2a6fc9;">Desactivado</div>
  <div class="t rw" style="left:114px;top:96px;">Formas ...do automático</div>
  <svg class="abs" style="left:384px;top:59.5px;" width="10" height="9" viewBox="0 0 10 9" fill="none"><path d="M5 4.500C5 3.500 6.500 3.500 6.500 4.800C6.500 6.500 3.500 6.500 3.300 4.300C3.200 1.800 7.800 1.500 8.300 4.500C8.600 7.500 2.500 8.800 1.500 4.500C1 1.500 4 0.500 5.500 0.800" stroke="#8e8e8e" stroke-width="0.900"/></svg><svg class="abs" style="left:384px;top:71px;" width="10" height="9" viewBox="0 0 10 9" fill="none"><path d="M5 4.500C5 3.500 6.500 3.500 6.500 4.800C6.500 6.500 3.500 6.500 3.300 4.300C3.200 1.800 7.800 1.500 8.300 4.500C8.600 7.500 2.500 8.800 1.500 4.500C1 1.500 4 0.500 5.500 0.800" stroke="#8e8e8e" stroke-width="0.900"/></svg><svg class="abs" style="left:384px;top:82.5px;" width="10" height="9" viewBox="0 0 10 9" fill="none"><path d="M5 4.500C5 3.500 6.500 3.500 6.500 4.800C6.500 6.500 3.500 6.500 3.300 4.300C3.200 1.800 7.800 1.500 8.300 4.500C8.600 7.500 2.500 8.800 1.500 4.500C1 1.500 4 0.500 5.500 0.800" stroke="#8e8e8e" stroke-width="0.900"/></svg><svg class="abs" style="left:384px;top:95px;" width="10" height="9" viewBox="0 0 10 9" fill="none"><path d="M5 4.500C5 3.500 6.500 3.500 6.500 4.800C6.500 6.500 3.500 6.500 3.300 4.300C3.200 1.800 7.800 1.500 8.300 4.500C8.600 7.500 2.500 8.800 1.500 4.500C1 1.500 4 0.500 5.500 0.800" stroke="#8e8e8e" stroke-width="0.900"/></svg>
  <!-- bottom row -->
  <div class="abs" style="left:3.500px;top:107px;width:366px;height:11px;background:#2b2b2b;"></div>
  <svg class="abs" style="left:4px;top:107px;" width="44" height="11" viewBox="4 489 44 11" fill="none">
    <rect x="6.500" y="490.500" width="5.500" height="4.500" fill="#9a9a9a" transform="rotate(20 9 493)"/><rect x="9.500" y="493.500" width="5.500" height="4.500" stroke="#9a9a9a" transform="rotate(20 12 496)"/>
    <circle cx="23.500" cy="493.500" r="2.800" stroke="#2d7fe0" stroke-width="1.300"/><circle cx="26.500" cy="496" r="2.800" stroke="#2d7fe0" stroke-width="1.300"/>
    <circle cx="39.500" cy="494.500" r="2.600" stroke="#b4b4b4" stroke-width="1.300"/><path d="M39.500 490V499M35 494.500H44" stroke="#b4b4b4" stroke-width="1"/>
  </svg>
  <div class="t" style="left:232px;top:108px;font-size:8.900px;color:#6c6c6c;">Conmutar definidores / modos</div>
  <!-- time area -->
  <div class="abs" style="left:474px;top:43.500px;width:7px;height:62px;background:#2a2a2a;"></div>
  <div class="abs" style="left:479.500px;top:23px;width:359px;height:6.300px;background:linear-gradient(#767676,#686868);"></div>
  <div class="abs" style="left:476px;top:23px;width:4px;height:7px;background:#2d8ceb;border-radius:2px 0 0 2px;"></div>
  <div class="abs" style="left:837.500px;top:23px;width:5.500px;height:7px;background:#2d8ceb;border-radius:0 3px 3px 0;"></div>
  <div class="t rl" style="left:476px;">:00s</div>
  <div class="t rl" style="left:521.500px;">02s</div>
  <div class="t rl" style="left:568px;">04s</div>
  <div class="t rl" style="left:616px;">06s</div>
  <div class="t rl" style="left:661px;">08s</div>
  <div class="t rl" style="left:707px;">10s</div>
  <div class="t rl" style="left:753.500px;">12s</div>
  <div class="t rl" style="left:800px;">14s</div>
  <div class="abs" style="left:480.500px;top:44px;width:356.500px;height:10px;background:#626262;"></div>
  <div class="abs" style="left:476.500px;top:43.500px;width:4px;height:11px;background:#2d8ceb;border-radius:1.500px;"></div>
  <div class="abs" style="left:836.500px;top:43.500px;width:4.500px;height:11px;background:#2d8ceb;border-radius:1.500px;"></div>
  <div class="abs" style="left:480.500px;top:54.500px;width:356.500px;height:3px;background:#24983f;"></div>
  <div class="abs" style="left:481px;top:58px;width:356px;height:47.500px;background:#353535;"></div>
  <div class="abs" style="left:481px;top:82px;width:356px;height:1px;background:#2a2a2a;"></div>
  <div class="abs" style="left:609.400px;top:38px;width:1.200px;height:67.500px;background:#2d8ceb;"></div>
  <svg class="abs" style="left:605px;top:33px;" width="10" height="10" viewBox="0 0 10 10"><path d="M0.800 1.500C0.800 0.800 9.200 0.800 9.200 1.500C9.200 5.500 7 9 5 9C3 9 0.800 5.500 0.800 1.500Z" fill="#2d8ceb"/></svg>
  <svg class="abs" style="left:606.500px;top:72px;" width="7" height="10" viewBox="0 0 7 10"><path d="M1 0.800H6M1 9.200H6M3.500 0.800V9.200" stroke="#e8e8e8" stroke-width="1.200" fill="none"/></svg>
  <svg class="abs" style="left:844px;top:44px;" width="12" height="12" viewBox="0 0 12 12"><path d="M1.500 1H10.500V6L6 11L1.500 6Z" fill="#d4d4d4"/></svg>
  <svg class="abs" style="left:843px;top:58px;" width="13" height="11" viewBox="0 0 13 11" fill="none"><path d="M5 1.500H11.500V8H5Z" fill="#cfcfcf"/><path d="M1 5.500L4.500 2.500V8.500Z" fill="#cfcfcf"/><path d="M2 9.500H9" stroke="#cfcfcf"/></svg>
  <div class="abs" style="left:844px;top:79.500px;width:11px;height:17px;background:#303030;border-radius:2px;"></div>
  <svg class="abs" style="left:478px;top:107px;" width="82" height="11" viewBox="478 489 82 11" fill="none">
    <path d="M481 496.500L483.500 493.500L485 495L486 494L487.500 496.500Z" fill="#bdbdbd"/>
    <path d="M505 494.700H535" stroke="#3a3a3a"/>
    <circle cx="500.800" cy="494.700" r="3" stroke="#d0d0d0" stroke-width="1.500" fill="#232323"/>
    <path d="M545 497.500L549 491.500L551.500 495L553.500 492.500L557 497.500Z" fill="#d0d0d0"/>
  </svg>
</div></div>
<div class="abs" style="left:0;top:51.500px;width:2.200px;height:449px;background:#1c1c1c;"></div>
</div>
</body>
</html>
